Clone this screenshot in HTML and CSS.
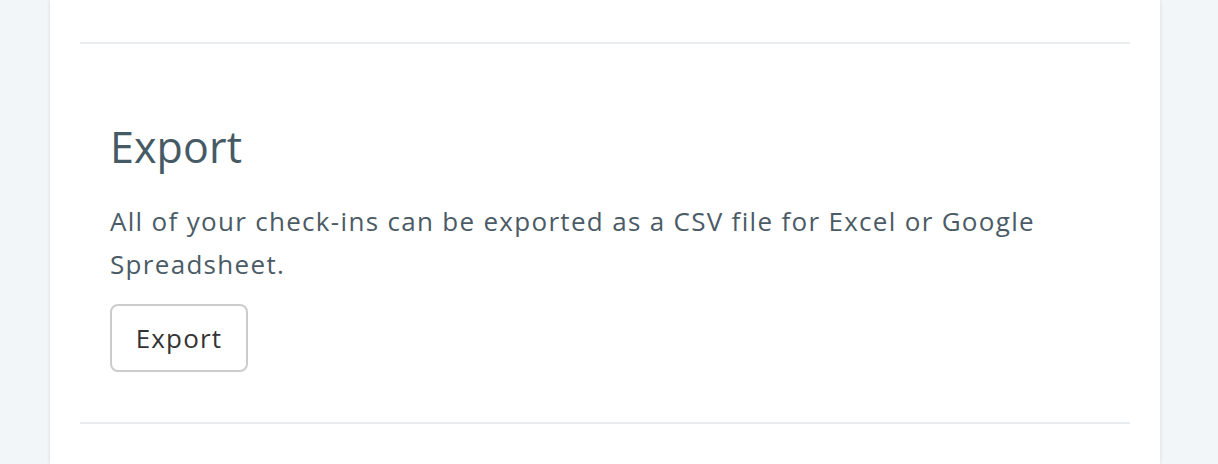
FILE: index.html
```html
<!DOCTYPE html>
<html>
<head>
<meta charset="utf-8">
<link rel="stylesheet" href="styles.css">
</head>
<body>
<div class="card">
  <div class="prev"></div>
  <div class="section">
    <h2 class="title">Export</h2>
    <p class="desc">All of your check-ins can be exported as a CSV file for Excel or Google Spreadsheet.</p>
    <button class="btn">Export</button>
  </div>
  <div class="next"></div>
</div>
</body>
</html>
```
FILE: styles.css
```css
html, body {
  margin: 0;
  padding: 0;
  height: 100%;
  overflow: hidden;
}
body {
  background: #f3f6f9;
  font-family: "Open Sans", "Noto Sans", sans-serif;
}
.card {
  margin-left: 50px;
  width: 1110px;
  height: 100%;
  background: #fff;
  box-shadow: 0 0 4px rgba(0, 0, 0, 0.12);
  padding: 0 30px;
  box-sizing: border-box;
}
.prev {
  height: 42px;
  border-bottom: 2px solid #e9ecef;
}
.section {
  padding: 80px 30px 50px;
  border-bottom: 2px solid #e9ecef;
}
.title {
  margin: 0;
  font-size: 43px;
  line-height: 46px;
  font-weight: 400;
  letter-spacing: 0.1px;
  color: #455a64;
}
.desc {
  margin: 30px 0 18px;
  font-size: 26px;
  line-height: 43px;
  letter-spacing: 1.31px;
  color: #4b5b66;
}
.btn {
  display: block;
  height: 68px;
  width: 138px;
  padding: 0;
  border: 2px solid #cccccc;
  border-radius: 8px;
  background: #fff;
  font-family: inherit;
  font-size: 26px;
  letter-spacing: 1.2px;
  color: #333;
}
```
